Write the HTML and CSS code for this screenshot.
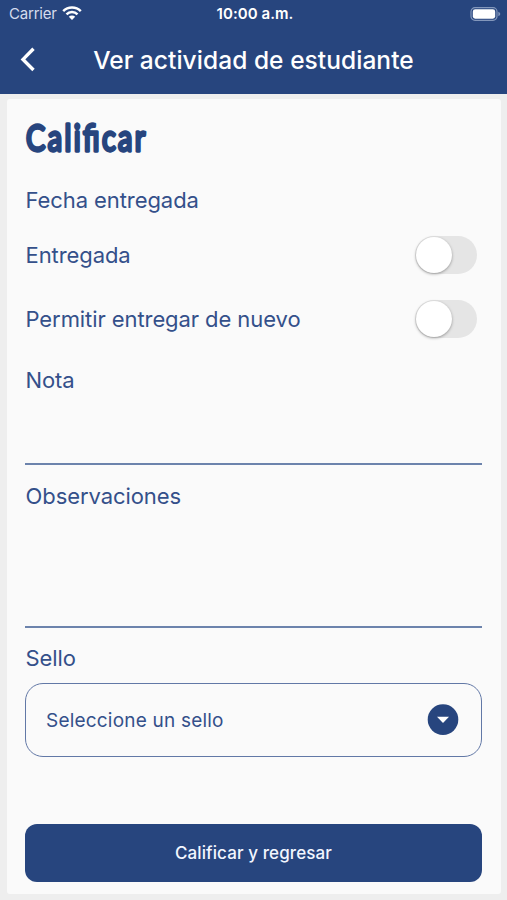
FILE: index.html
```html
<!DOCTYPE html>
<html lang="es">
<head>
	<meta charset="UTF-8">
	<title>Ver actividad de estudiante</title>
	<link rel="stylesheet" href="styles.css">
</head>
<body>
	<header class="header">
		<div class="status">
			<div class="carrier">
				<span>Carrier</span>
				<svg width="20" height="14" viewBox="0 0 20 14">
					<path d="M1.2 5.1a12.4 12.4 0 0 1 17.6 0M4.5 8.3a7.8 7.8 0 0 1 11 0" fill="none" stroke="#fff" stroke-width="2.5"/>
					<path d="M10 14L6.8 10.7a4.6 4.6 0 0 1 6.4 0z" fill="#fff"/>
				</svg>
			</div>
			<span class="time">10:00 a.m.</span>
			<svg class="battery" width="31" height="14" viewBox="0 0 31 14">
				<rect x="1" y=".7" width="26" height="12.6" rx="4" fill="none" stroke="#8397bb" stroke-width="1.2"/>
				<rect x="2.8" y="2.3" width="22.4" height="9.4" rx="2.4" fill="#fff"/>
				<path d="M28.3 4.7q2 .8 2 2.3t-2 2.3z" fill="#8397bb"/>
			</svg>
		</div>
		<div class="nav">
			<svg class="back" width="16" height="26" viewBox="0 0 16 26">
				<path d="M13.5 1.8L3 12.4l10.5 10.6" fill="none" stroke="#fff" stroke-width="3.4"/>
			</svg>
			<h1>Ver actividad de estudiante</h1>
		</div>
	</header>
	<main class="card">
		<h2>
			<svg width="200" height="50" viewBox="0 0 200 50">
				<text class="logo" transform="scale(.8 1)" x="1.4" y="33.3" textLength="149">Calificar</text>
			</svg>
		</h2>
		<div class="row fecha"><span class="label">Fecha entregada</span></div>
		<div class="row entregada">
			<span class="label">Entregada</span>
			<span class="switch"></span>
		</div>
		<div class="row permitir">
			<span class="label">Permitir entregar de nuevo</span>
			<span class="switch"></span>
		</div>
		<div class="field nota"><span class="label">Nota</span></div>
		<div class="field obs"><span class="label">Observaciones</span></div>
		<div class="sello"><span class="label">Sello</span></div>
		<div class="select">
			<span>Seleccione un sello</span>
			<svg width="32" height="32" viewBox="0 0 32 32">
				<circle cx="16" cy="15.6" r="15.3" fill="#27457e"/>
				<path d="M10 12.7h12l-6 6.3z" fill="#fff"/>
			</svg>
		</div>
		<button class="submit">Calificar y regresar</button>
	</main>
</body>
</html>
```

FILE: styles.css
```css
*{
	box-sizing: border-box;
}
body{
	margin: 0;
	height: 900px;
	overflow: hidden;
	background-color: #eee;
	color: #34508a;
	font-family: Inter, "Liberation Sans", sans-serif;
}
.header{
	height: 94px;
	background-color: #27457e;
	color: #fff;
}
.status{
	display: grid;
	grid-template-columns: 1fr auto 1fr;
	align-items: center;
	height: 27px;
	padding: 0 6px 0 9px;
	font-size: 15px;
}
.carrier{
	display: flex;
	align-items: center;
	gap: 5px;
	color: #d5dced;
	letter-spacing: -.2px;
}
.carrier svg{
	margin-top: -2px;
}
.time{
	font-weight: 600;
	letter-spacing: .05px;
}
.battery{
	justify-self: end;
}
.nav{
	display: grid;
	grid-template-columns: 40px 1fr 40px;
	align-items: center;
	height: 65px;
	padding: 0 20px;
}
h1{
	margin: 0;
	font-size: 24.5px;
	font-weight: 500;
	letter-spacing: .05px;
	text-align: center;
	white-space: nowrap;
}
.card{
	height: 795px;
	margin: 5px 6px 0 7px;
	padding: 19px 19px 0 18px;
	border-radius: 3px;
	background-color: #fafafa;
}
h2{
	height: 42px;
	margin: 0;
}
h2 svg{
	display: block;
	overflow: visible;
}
.logo{
	font-family: Lato, sans-serif;
	font-size: 36px;
	font-weight: 400;
	font-feature-settings: "liga";
	fill: #27457e;
	stroke: #27457e;
	stroke-width: 3.3;
	stroke-linecap: round;
	stroke-linejoin: round;
}
.row{
	display: flex;
	align-items: center;
	justify-content: space-between;
	padding-right: 5px;
}
.label{
	padding-left: .5px;
	font-size: 22px;
	line-height: 30px;
	letter-spacing: -.08px;
}
.fecha{
	height: 62px;
	margin-top: 9px;
	margin-bottom: -9px;
}
.entregada{
	height: 65px;
}
.permitir{
	height: 64px;
	margin-bottom: 1px;
}
.switch{
	width: 62px;
	height: 38px;
	padding: 1px;
	border-radius: 19px;
	background-color: #e5e5e5;
}
.switch::before{
	content: '';
	display: block;
	width: 36px;
	height: 36px;
	border-radius: 50%;
	background-color: #fff;
	box-shadow: 0 1px 3px rgba(0,0,0,.35);
}
.field{
	border-bottom: 2px solid #6c83ac;
}
.nota{
	height: 113px;
	padding-top: 13px;
}
.obs{
	height: 163px;
	padding-top: 16px;
}
.sello{
	height: 55px;
	padding-top: 15px;
}
.select{
	display: flex;
	align-items: center;
	justify-content: space-between;
	height: 74px;
	padding: 0 22px 0 20px;
	border: 1.5px solid #6278a6;
	border-radius: 18px;
	font-size: 19px;
	letter-spacing: .2px;
}
.submit{
	display: block;
	width: 100%;
	height: 58px;
	margin-top: 67px;
	border: 0;
	border-radius: 12px;
	background-color: #27457e;
	color: #f2f6ff;
	font-family: inherit;
	font-size: 17px;
	font-weight: 500;
	letter-spacing: .1px;
}
```
